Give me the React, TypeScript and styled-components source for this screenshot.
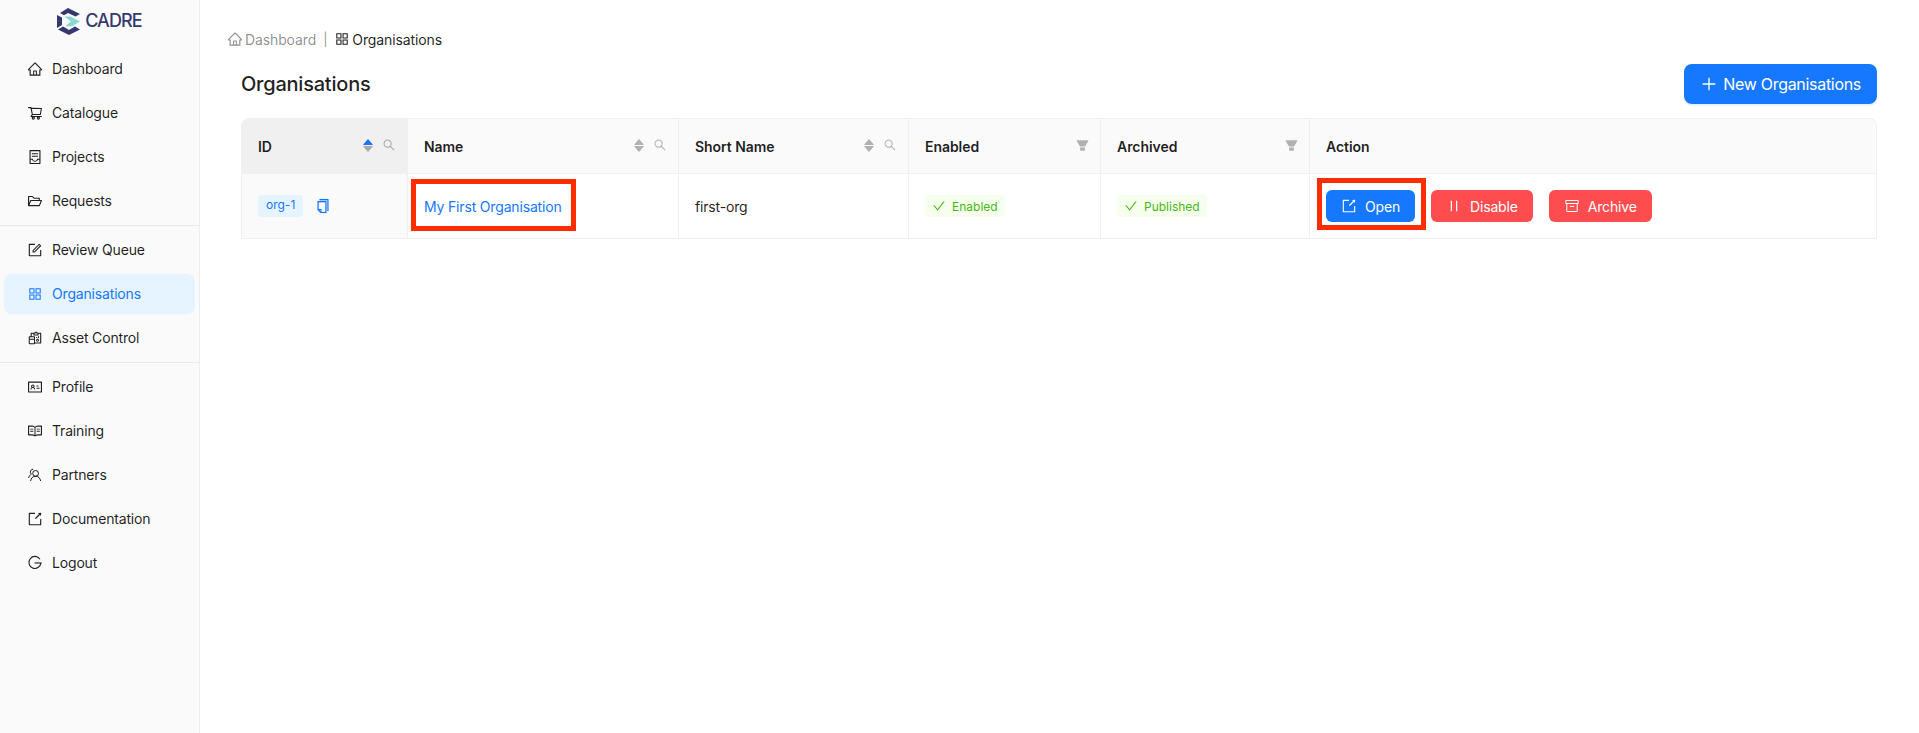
import React from 'react';
import styled, { createGlobalStyle } from 'styled-components';
import {
  AiOutlineHome,
  AiOutlineShoppingCart,
  AiOutlineContainer,
  AiOutlineFolderOpen,
  AiOutlineForm,
  AiOutlineAppstore,
  AiOutlineReconciliation,
  AiOutlineIdcard,
  AiOutlineRead,
  AiOutlineExport,
  AiOutlineSearch,
  AiOutlineCheck,
  AiOutlinePause,
  AiOutlinePlus,
  AiOutlineCopy,
  AiFillCaretUp,
  AiFillCaretDown,
  AiFillFilter,
} from 'react-icons/ai';

const GlobalStyle = createGlobalStyle`
  html, body {
    margin: 0;
    padding: 0;
    height: 100%;
    background: #fff;
    font-family: Inter, "Liberation Sans", sans-serif;
    font-size: 14px;
    letter-spacing: -0.17px;
    color: rgba(0, 0, 0, 0.88);
  }
  * { box-sizing: border-box; }
`;

const BLUE = '#1677ff';
const RED = '#ff4d4f';

const PartnersIcon = () => (
  <svg width="16" height="16" viewBox="0 0 16 16" fill="none" stroke="currentColor" strokeWidth="1">
    <circle cx="8.6" cy="6.4" r="2.9" />
    <path d="M3.6 14c.3-2.8 2.2-4.8 5-4.8s4.6 2 5 4.8" />
    <path d="M6.2 2.2A2.8 2.8 0 0 0 4.4 7.2C3 8 2 9.2 1.6 11" />
  </svg>
);

const LogoutIcon = () => (
  <svg width="16" height="16" viewBox="0 0 16 16" fill="none" stroke="currentColor" strokeWidth="1.1">
    <path d="M13 4.2A6 6 0 1 0 13.9 8" />
    <path d="M7.6 8h7" />
  </svg>
);

const ArchiveIcon = () => (
  <svg width="16" height="16" viewBox="0 0 16 16" fill="none" stroke="currentColor" strokeWidth="1">
    <path d="M1.8 2.5h12.4v3H1.8z" />
    <path d="M2.8 5.5v8h10.4v-8" />
    <path d="M5.8 8.4h4.4" />
  </svg>
);

const Logo = () => (
  <svg width="24" height="27" viewBox="0 0 24 27">
    <path d="M11 0 L23 6 L18.5 8.6 L11 5 L7 7.2 L3 5 Z" fill="#34386f" />
    <path d="M0 7 L5 9.6 L5 17 L0 20 Z" fill="#34386f" />
    <path d="M1 21.4 L6 18.6 L12 22 L18 18.6 L23 21.4 L12 27 Z" fill="#34386f" />
    <path d="M7.5 8.5 L13.5 8.5 L23 13.5 L15 18.2 L8 18.2 L14 13.5 Z" fill="#8ad8d2" />
  </svg>
);

type NavEntry = { label: string; icon: React.ReactNode; active?: boolean };

const groups: NavEntry[][] = [
  [
    { label: 'Dashboard', icon: <AiOutlineHome /> },
    { label: 'Catalogue', icon: <AiOutlineShoppingCart /> },
    { label: 'Projects', icon: <AiOutlineContainer /> },
    { label: 'Requests', icon: <AiOutlineFolderOpen /> },
  ],
  [
    { label: 'Review Queue', icon: <AiOutlineForm /> },
    { label: 'Organisations', icon: <AiOutlineAppstore />, active: true },
    { label: 'Asset Control', icon: <AiOutlineReconciliation /> },
  ],
  [
    { label: 'Profile', icon: <AiOutlineIdcard /> },
    { label: 'Training', icon: <AiOutlineRead /> },
    { label: 'Partners', icon: <PartnersIcon /> },
    { label: 'Documentation', icon: <AiOutlineExport /> },
    { label: 'Logout', icon: <LogoutIcon /> },
  ],
];

const SortIcons = ({ active }: { active?: boolean }) => (
  <SortStack>
    <SortCaret $active={active}><AiFillCaretUp /></SortCaret>
    <SortCaret><AiFillCaretDown /></SortCaret>
  </SortStack>
);

function App() {
  return (
    <Page>
      <GlobalStyle />
      <Sider>
        <LogoRow>
          <Logo />
          <LogoText>CADRE</LogoText>
        </LogoRow>
        {groups.map((group, i) => (
          <React.Fragment key={i}>
            {i > 0 && <Divider />}
            {group.map((item) => (
              <NavItem key={item.label} $active={item.active}>
                <NavIcon>{item.icon}</NavIcon>
                {item.label}
              </NavItem>
            ))}
          </React.Fragment>
        ))}
      </Sider>
      <Main>
        <Breadcrumb>
          <CrumbMuted>
            <AiOutlineHome />
            Dashboard
          </CrumbMuted>
          <CrumbSep>|</CrumbSep>
          <CrumbCurrent>
            <AiOutlineAppstore />
            Organisations
          </CrumbCurrent>
        </Breadcrumb>
        <Content>
          <TitleRow>
            <Title>Organisations</Title>
            <PrimaryLarge>
              <AiOutlinePlus />
              New Organisations
            </PrimaryLarge>
          </TitleRow>
          <TableWrap>
            <Table>
              <colgroup>
                <col style={{ width: 166 }} />
                <col style={{ width: 271 }} />
                <col style={{ width: 230 }} />
                <col style={{ width: 192 }} />
                <col style={{ width: 209 }} />
                <col />
              </colgroup>
              <thead>
                <tr>
                  <Th $sorted>
                    <ThInner>
                      <span>ID</span>
                      <ThTools><SortIcons active /><SearchGlyph><AiOutlineSearch /></SearchGlyph></ThTools>
                    </ThInner>
                  </Th>
                  <Th>
                    <ThInner>
                      <span>Name</span>
                      <ThTools><SortIcons /><SearchGlyph><AiOutlineSearch /></SearchGlyph></ThTools>
                    </ThInner>
                  </Th>
                  <Th>
                    <ThInner>
                      <span>Short Name</span>
                      <ThTools><SortIcons /><SearchGlyph><AiOutlineSearch /></SearchGlyph></ThTools>
                    </ThInner>
                  </Th>
                  <Th>
                    <ThInner>
                      <span>Enabled</span>
                      <FilterGlyph><AiFillFilter /></FilterGlyph>
                    </ThInner>
                  </Th>
                  <Th>
                    <ThInner>
                      <span>Archived</span>
                      <FilterGlyph><AiFillFilter /></FilterGlyph>
                    </ThInner>
                  </Th>
                  <Th $last>Action</Th>
                </tr>
              </thead>
              <tbody>
                <tr>
                  <Td $sorted>
                    <IdTag>org-1</IdTag>
                    <CopyGlyph><AiOutlineCopy /></CopyGlyph>
                  </Td>
                  <Td>
                    <NameLink>My First Organisation</NameLink>
                    <NameHighlight />
                  </Td>
                  <Td>first-org</Td>
                  <Td>
                    <StatusTag><AiOutlineCheck />Enabled</StatusTag>
                  </Td>
                  <Td>
                    <StatusTag><AiOutlineCheck />Published</StatusTag>
                  </Td>
                  <Td $last>
                    <Actions>
                      <ActionButton $color={BLUE}><AiOutlineExport />Open</ActionButton>
                      <OpenHighlight />
                      <ActionButton $color={RED}><AiOutlinePause />Disable</ActionButton>
                      <ActionButton $color={RED}><ArchiveIcon />Archive</ActionButton>
                    </Actions>
                  </Td>
                </tr>
              </tbody>
            </Table>
          </TableWrap>
        </Content>
      </Main>
    </Page>
  );
}

const Page = styled.div`
  display: flex;
  min-height: 733px;
`;

const Sider = styled.aside`
  width: 200px;
  flex: none;
  background: #fafafa;
  border-right: 1px solid #eeeeee;
`;

const LogoRow = styled.div`
  height: 49px;
  display: flex;
  align-items: flex-start;
  justify-content: center;
  gap: 4px;
  padding-top: 8px;
`;

const LogoText = styled.span`
  font-size: 18px;
  line-height: 26px;
  letter-spacing: -0.9px;
  font-weight: 500;
  color: #34386f;
`;

const NavItem = styled.div<{ $active?: boolean }>`
  height: 40px;
  margin: 0 4px 4px;
  padding-left: 23px;
  display: flex;
  align-items: center;
  gap: 9px;
  border-radius: 8px;
  line-height: 22px;
  color: ${(p) => (p.$active ? BLUE : 'rgba(0, 0, 0, 0.88)')};
  background: ${(p) => (p.$active ? '#e6f4ff' : 'transparent')};
`;

const NavIcon = styled.span`
  display: inline-flex;
  font-size: 16px;
  svg { display: block; }
`;

const Divider = styled.div`
  height: 1px;
  background: rgba(5, 5, 5, 0.06);
  margin: 3px 0 4px;
`;

const Main = styled.main`
  flex: 1;
  min-width: 0;
  padding: 28px 42px 0 27px;
`;

const Breadcrumb = styled.nav`
  display: flex;
  align-items: center;
  height: 22px;
  gap: 7px;
  letter-spacing: -0.12px;
`;

const CrumbMuted = styled.span`
  display: inline-flex;
  align-items: center;
  gap: 2px;
  color: rgba(0, 0, 0, 0.45);
  svg { font-size: 16px; }
`;

const CrumbSep = styled.span`
  color: rgba(0, 0, 0, 0.45);
  font-size: 13px;
`;

const CrumbCurrent = styled.span`
  display: inline-flex;
  align-items: center;
  gap: 2px;
  svg { font-size: 16px; }
`;

const Content = styled.div`
  padding-left: 14px;
`;

const TitleRow = styled.div`
  display: flex;
  align-items: center;
  justify-content: space-between;
  margin-top: 14px;
  margin-bottom: 14px;
`;

const Title = styled.h1`
  margin: 0;
  font-size: 20px;
  line-height: 28px;
  font-weight: 500;
  letter-spacing: -0.22px;
`;

const PrimaryLarge = styled.button`
  height: 40px;
  padding: 0 16px;
  display: inline-flex;
  align-items: center;
  gap: 5px;
  border: 0;
  border-radius: 8px;
  background: ${BLUE};
  color: #fff;
  font: inherit;
  font-size: 16px;
  letter-spacing: -0.3px;
  box-shadow: 0 2px 0 rgba(5, 145, 255, 0.1);
  svg { font-size: 18px; }
`;

const TableWrap = styled.div`
  border: 1px solid #f0f0f0;
  border-bottom: 0;
  border-radius: 8px 8px 0 0;
  overflow: hidden;
`;

const Table = styled.table`
  width: 100%;
  table-layout: fixed;
  border-collapse: separate;
  border-spacing: 0;
`;

const Th = styled.th<{ $sorted?: boolean; $last?: boolean }>`
  height: 55px;
  padding: 0 16px;
  text-align: left;
  font-weight: 600;
  letter-spacing: -0.05px;
  background: ${(p) => (p.$sorted ? '#f0f0f0' : '#fafafa')};
  border-right: ${(p) => (p.$last ? '0' : '1px solid #f0f0f0')};
  border-bottom: 1px solid #f0f0f0;
`;

const ThInner = styled.div`
  display: flex;
  align-items: center;
  justify-content: space-between;
`;

const ThTools = styled.span`
  display: inline-flex;
  align-items: center;
  gap: 7px;
  margin-right: -5px;
  margin-top: -2px;
`;

const SortStack = styled.span`
  display: inline-flex;
  flex-direction: column;
  font-size: 14px;
`;

const SortCaret = styled.span<{ $active?: boolean }>`
  display: block;
  height: 7px;
  line-height: 0;
  color: ${(p) => (p.$active ? BLUE : 'rgba(0, 0, 0, 0.29)')};
  svg { display: block; margin-top: -3.5px; }
`;

const SearchGlyph = styled.span`
  display: inline-flex;
  font-size: 14px;
  color: rgba(0, 0, 0, 0.29);
`;

const FilterGlyph = styled.span`
  display: inline-flex;
  font-size: 15px;
  margin-right: -6px;
  margin-top: -2px;
  color: rgba(0, 0, 0, 0.29);
`;

const Td = styled.td<{ $sorted?: boolean; $last?: boolean }>`
  position: relative;
  height: 65px;
  padding: 0 16px;
  background: ${(p) => (p.$sorted ? '#fafafa' : '#fff')};
  border-right: ${(p) => (p.$last ? '0' : '1px solid #f0f0f0')};
  border-bottom: 1px solid #f0f0f0;
`;

const IdTag = styled.span`
  display: inline-block;
  height: 22px;
  line-height: 20px;
  padding: 0 8px;
  font-size: 12px;
  letter-spacing: 0;
  border-radius: 4px;
  background: #e6f4ff;
  color: ${BLUE};
  vertical-align: middle;
`;

const CopyGlyph = styled.span`
  display: inline-flex;
  margin-left: 12px;
  font-size: 16px;
  color: ${BLUE};
  vertical-align: middle;
  svg { stroke: currentColor; stroke-width: 10px; }
`;

const NameLink = styled.a`
  color: ${BLUE};
`;

const NameHighlight = styled.span`
  position: absolute;
  left: 3px;
  top: 5px;
  width: 165px;
  height: 52px;
  border: 5px solid #ff2d00;
  pointer-events: none;
`;

const StatusTag = styled.span`
  display: inline-flex;
  align-items: center;
  gap: 6px;
  height: 22px;
  padding: 0 7px;
  font-size: 12px;
  letter-spacing: 0;
  border-radius: 4px;
  background: #f6ffed;
  color: #4ab516;
  svg { font-size: 14px; }
`;

const Actions = styled.div`
  position: relative;
  display: flex;
  gap: 16px;
`;

const ActionButton = styled.button<{ $color: string }>`
  height: 32px;
  padding: 0 15px;
  display: inline-flex;
  align-items: center;
  gap: 8px;
  border: 0;
  border-radius: 6px;
  background: ${(p) => p.$color};
  color: #fff;
  font: inherit;
  letter-spacing: -0.17px;
  svg { font-size: 16px; }
`;

const OpenHighlight = styled.span`
  position: absolute;
  left: -9px;
  top: -12px;
  width: 109px;
  height: 52px;
  border: 5px solid #ff2d00;
  pointer-events: none;
`;

export default App;
